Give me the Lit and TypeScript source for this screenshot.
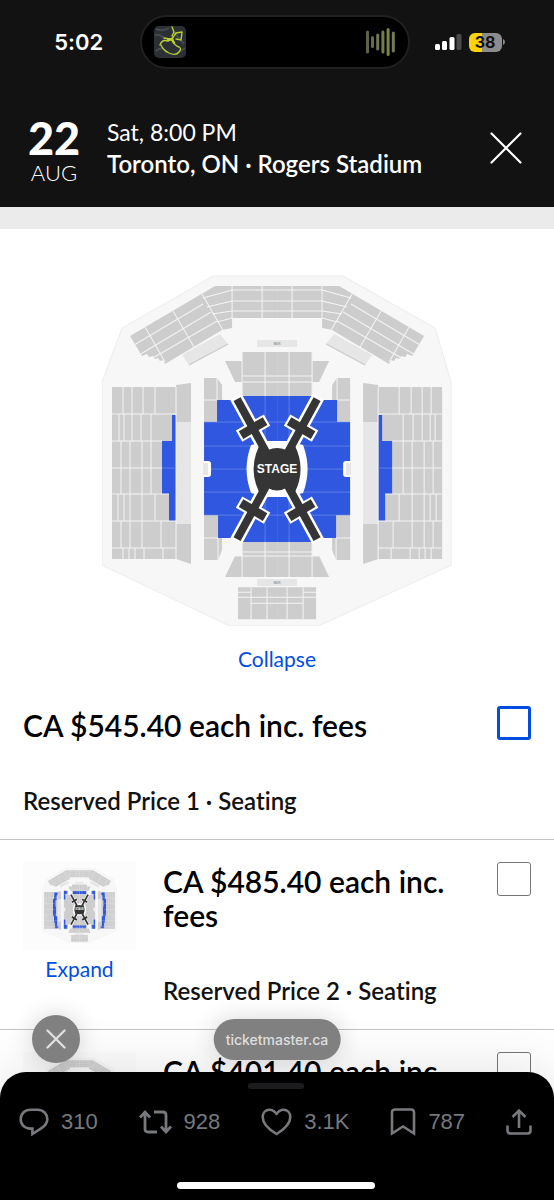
import { LitElement, html, css, svg } from "lit";
import { customElement, property } from "lit/decorators.js";

type Zone = "centre" | "edges";

const GREY = "#cdcdcd";
const PALE = "#e6e6e6";
const BLUE = "#2f57df";

/** West half of the stadium; the east half is the same drawing mirrored. */
const halfBowl = (zone: Zone) => {
  const centre = zone === "centre";
  const floor = centre ? BLUE : GREY;
  return svg`
    <g fill=${GREY}>
      <path d="M130 336L215 286H277V318H232V328L222 330L165 364L163 360L160 361L158 358L155 359L153 356L149 357L147 354L142 356Z" />
      <path d="M112 387H176V559H112Z" />
      <path d="M176 385L191 383V422H176ZM176 524H191V564L176 559Z" />
      <path d="M204 378H217L222 385V400H217V422H204ZM204 515H218V538H222V550L218 560H204Z" />
      <path d="M225 361H242V352H277V398H242V382H235Z" />
      <path d="M225 577L235 556H242V540H277V577Z" />
      <path d="M238 587H277V619H238Z" />
    </g>
    <g fill=${PALE}>
      <path d="M182 355L220 334L228 344L189 365Z" />
      <path d="M176 422H191V524H176Z" />
      <path d="M257 340H277V347H257ZM257 579H277V586H257Z" />
    </g>
    <path d="M189 365L228 344" stroke="#c9c9c9" />
    <path d="M204 422H217V400H232L242 396H277V542H242V538H218V515H204Z" fill=${floor} />
    ${centre
      ? svg`<path d="M172 415H176V521H169V494H162V441H172Z" fill=${BLUE} />`
      : svg`<path d="M160 389H175V402H170V425H165V455H167V500H173V545H178V556H162V530H158V500H153V420H158Z
          M204 382H220V396H211V422H204ZM204 515H211V540H220V558H204ZM246 382H277V396H246ZM246 543H277V556H246Z" fill=${BLUE} />`}
    <g fill="none" stroke="#f4f4f4" stroke-width="1">
      <path d="M232 286V318M262 286V318M232 290H277M232 301H277M232 311H277" />
      <path d="M145 327L165 362M173 311L194 347M202 294L224 332" />
      <path d="M134 345L203 304M139 355L211 312M151 359L217 321M203 298L232 290M207 307L232 301M212 314L232 311M217 322L232 318" />
      <path d="M112 414H176M112 441H162M112 468H162M112 494H169M112 521H176M112 548H176M176 387V559" />
      <path d="M123 387V414M132 387V414M143 387V414M155 387V414" />
      <path d="M119 414V441M124 414V441M132 414V441M141 414V441M151 414V441" />
      <path d="M121 441V494M130 441V494M142 441V494M151 441V494" />
      <path d="M118 494V521M124 494V521M130 494V521M142 494V521M155 494V521" />
      <path d="M121 521V548M130 521V548M142 521V548M161 521V548" />
      <path d="M123 548V559M129 548V559M135 548V559M144 548V559M163 548V559" />
      <path d="M204 400H217M217 378V400M204 538H218M218 538V560" />
      <path d="M242 352V396M265 352V396M242 376H277M242 382H277" />
      <path d="M242 542V577M265 542V577M242 552H277M235 556H277" />
      <path d="M251 587V619M267 587V619M238 592H251M251 597H277M251 603H277M238 597H251" />
    </g>
    <g fill="none" stroke="#7f98ec" stroke-width="0.6" opacity=${centre ? 1 : 0}>
      <path d="M204 422H277M204 446H277M204 469H277M204 492H277M204 515H277M265 396V542M162 468H176" />
    </g>
    <path d="M203 461H208Q211 461 211 464V474Q211 477 208 477H203Z" fill="#fff" />
    <path d="M203 463H208V475H203Z" fill=${PALE} />
  `;
};

/** One catwalk running from the round stage to the north-west corner. */
const catwalk = (mirror: string) => svg`
  <path transform=${mirror} d="M237 399L266 452" />
`;

/** The short bar that crosses a catwalk half way along. */
const crossbar = (mirror: string) => svg`
  <path transform=${mirror} d="M241 435L265 421" />
`;

/** White clearance around a catwalk and its crossbar. */
const clearance = (mirror: string) => svg`
  <path transform=${mirror} d="M236 397L266 452M239 436L267 420" />
`;

const MIRRORS = [
  "",
  "translate(554 0) scale(-1 1)",
  "translate(0 938) scale(1 -1)",
  "translate(554 938) scale(-1 -1)",
];

@customElement("seat-map")
class SeatMap extends LitElement {
  @property() zone: Zone = "centre";

  static styles = css`
    :host {
      display: block;
    }
    .map {
      display: block;
      width: 100%;
      height: auto;
    }
    .label {
      font: 700 12px "Liberation Sans", Arial, sans-serif;
      fill: #fff;
    }
    .mix {
      font: 700 4px "Liberation Sans", Arial, sans-serif;
      fill: #999;
    }
  `;

  render() {
    return html`
      <svg class="map" viewBox="102 275 350 351" role="img" aria-label="Seating map">
        <path
          d="M213 276H343L435 328L451 382V565L320 625H228L102 565V382L122 328Z"
          fill="#f7f7f7"
          stroke="#ededed"
        />
        ${halfBowl(this.zone)}
        <g transform="translate(554 0) scale(-1 1)">${halfBowl(this.zone)}</g>
        <g fill="none" stroke="#fff" stroke-width="13">${MIRRORS.map(clearance)}</g>
        <path
          d="M251 445L268 441H286L303 445Q312 469 303 493L286 497H268L251 493Q242 469 251 445Z"
          fill="#fff"
        />
        <g fill="none" stroke="#353535">
          <g stroke-width="8">${MIRRORS.map(catwalk)}</g>
          <g stroke-width="9">${MIRRORS.map(crossbar)}</g>
        </g>
        <path
          d="M259 446L268 450Q277 446 286 450L295 446Q306 469 295 492L286 488Q277 493 268 488L259 492Q248 469 259 446Z"
          fill="#353535"
        />
        <text class="label" x="277" y="473" text-anchor="middle">STAGE</text>
        ${this.zone === "centre"
          ? svg`
            <text class="mix" x="277" y="345" text-anchor="middle">MIX</text>
            <text class="mix" x="277" y="584" text-anchor="middle">MIX</text>`
          : null}
      </svg>
    `;
  }
}

@customElement("status-bar")
class StatusBar extends LitElement {
  static styles = css`
    :host {
      display: grid;
      grid-template-columns: 1fr 270px 1fr;
      align-items: center;
      height: 84px;
      padding-right: 5px;
      color: #fff;
      font-family: Inter, sans-serif;
    }
    .time {
      justify-self: center;
      padding-left: 18px;
      font-size: 22px;
      font-weight: 600;
    }
    .island {
      display: flex;
      align-items: center;
      justify-content: space-between;
      box-sizing: border-box;
      height: 54px;
      padding: 0 12px;
      border: 2px solid #202020;
      border-radius: 27px;
      background: #000;
    }
    .system {
      display: flex;
      align-items: center;
      gap: 7px;
      padding-left: 25px;
    }
    .battery {
      display: flex;
      align-items: center;
    }
    .charge {
      width: 33px;
      border-radius: 6px;
      background: linear-gradient(90deg, #fbd30b 40%, #8c8c8c 40%);
      color: #111;
      font-size: 16px;
      font-weight: 700;
      line-height: 19px;
      text-align: center;
    }
    svg {
      display: block;
    }
  `;

  render() {
    return html`
      <span class="time">5:02</span>
      <div class="island">
        <svg width="32" height="32" viewBox="0 0 32 32" aria-hidden="true">
          <rect width="32" height="32" rx="5" fill="#2c3035" />
          <path d="M2 3Q9 6 15 2M1 9Q6 8 11 13M2 25Q8 19 13 27M20 6L30 18M22 28L31 22" stroke="#454a50" stroke-width="2" fill="none" />
          <g fill="none" stroke="#b9cf2b" stroke-linecap="round">
            <path d="M6 19Q8 13 14 15Q18 14 20 10L22 7L28 6M18 1L20 6L18 10M28 6L27 14L22 13" stroke-width="1.4" />
            <path d="M10 12L17 13Q21 20 25 21M25 21Q28 22 25 26Q22 30 15 27Q9 24 7 19" stroke-width="1.3" />
            <path d="M14 14L18 13L20 17" stroke-width="2.4" />
          </g>
        </svg>
        <svg width="30" height="30" viewBox="0 0 30 30" stroke-width="3" stroke-linecap="round" aria-hidden="true">
          <path d="M1.500 5V25" stroke="#5d6249" />
          <path d="M6.500 10.500V19.500" stroke="#646a4b" />
          <path d="M11.700 8V22" stroke="#6f7752" />
          <path d="M16.900 5V25" stroke="#737d4c" />
          <path d="M22.100 2.500V27.500" stroke="#79844b" />
          <path d="M27.300 6V24" stroke="#747d50" />
        </svg>
      </div>
      <div class="system">
        <svg width="27" height="18" viewBox="0 0 27 18" role="img" aria-label="Signal">
          <rect x="0" y="11" width="5" height="6" rx="1.500" fill="#fff" />
          <rect x="7" y="8" width="5" height="9" rx="1.500" fill="#fff" />
          <rect x="14.500" y="4" width="5" height="13" rx="1.500" fill="#fff" />
          <rect x="21.500" y="1" width="5" height="16" rx="1.500" fill="#4a4a4a" />
        </svg>
        <div class="battery">
          <div class="charge">38</div>
          <svg width="4" height="8" viewBox="0 0 4 8" aria-hidden="true">
            <path d="M1 1Q3 2 3 4Q3 6 1 7Z" fill="#8c8c8c" />
          </svg>
        </div>
      </div>
    `;
  }
}

interface Offer {
  id: string;
  price: string;
  detail?: string;
  thumb: boolean;
  active: boolean;
}

const OFFERS: Offer[] = [
  { id: "p1", price: "CA $545.40 each inc. fees", detail: "Reserved Price 1 · Seating", thumb: false, active: true },
  { id: "p2", price: "CA $485.40 each inc. fees", detail: "Reserved Price 2 · Seating", thumb: true, active: false },
  { id: "p3", price: "CA $401.40 each inc.", thumb: true, active: false },
];

@customElement("app-root")
class AppRoot extends LitElement {
  static styles = css`
    :host {
      display: flex;
      flex-direction: column;
      height: 100vh;
      overflow: hidden;
      background: #fff;
      color: #121212;
      font-family: Lato, sans-serif;
      font-variant-ligatures: none;
    }
    button {
      display: flex;
      align-items: center;
      padding: 0;
      border: 0;
      background: none;
      color: inherit;
      font: inherit;
    }
    svg {
      display: block;
      flex: none;
    }
    .top {
      flex: none;
      border-bottom: 22px solid #ebebeb;
      background: #121212;
      color: #fff;
    }
    .event {
      display: flex;
      align-items: flex-start;
      padding: 33px 32px 20px 29px;
    }
    .date {
      display: flex;
      flex-direction: column;
      align-items: center;
      width: 50px;
      margin-right: 28px;
    }
    .day {
      font-size: 45px;
      font-weight: 900;
      line-height: 42px;
    }
    .month {
      font-size: 22px;
      font-weight: 300;
      line-height: 28px;
    }
    .where {
      flex: 1;
      font-size: 23px;
      line-height: 31px;
    }
    .venue {
      font-size: 24px;
      font-weight: 600;
    }
    .dismiss {
      margin-top: 15px;
    }
    .content {
      flex: 1;
      min-height: 0;
      overflow: hidden;
    }
    .overview {
      display: flex;
      flex-direction: column;
      align-items: center;
      gap: 21px;
      padding: 46px 24px 13px;
    }
    .overview seat-map {
      width: 69.200%;
      min-width: 280px;
      max-width: 480px;
    }
    .link {
      color: #024ddf;
      font-size: 21px;
      line-height: 24px;
      text-decoration: none;
    }
    .offer {
      display: flex;
      align-items: flex-start;
      padding: 22px 23px 24px;
      border-bottom: 1px solid #c4c4c4;
    }
    .preview {
      display: flex;
      flex-direction: column;
      align-items: center;
      gap: 8px;
      width: 113px;
      margin-right: 27px;
    }
    .frame {
      width: 75px;
      padding: 6px 19px;
      background: #fcfcfc;
    }
    .text {
      flex: 1;
      display: flex;
      flex-direction: column;
      gap: 45px;
      padding: 2px 24px 0 0;
    }
    .price {
      color: #000;
      font-size: 30px;
      font-weight: 600;
      line-height: 34px;
    }
    .detail {
      font-size: 24px;
      font-weight: 600;
      line-height: 28px;
    }
    .tick {
      appearance: none;
      flex: none;
      width: 34px;
      height: 34px;
      margin: 0;
      border: 1px solid #767676;
      border-radius: 3px;
      background: #fff;
    }
    .tick.active {
      border: 3px solid #024ddf;
    }
    .sheet {
      position: relative;
      flex: none;
      box-sizing: border-box;
      height: 128px;
      margin-top: -26px;
      padding: 11px 22px 11px 19px;
      border-radius: 26px 26px 0 0;
      background: #000;
      color: #77797d;
      display: flex;
      flex-direction: column;
      align-items: center;
      justify-content: space-between;
      box-shadow: 0 0 60px rgba(0, 0, 0, 0.12);
    }
    .handle {
      width: 56px;
      height: 6px;
      border-radius: 3px;
      background: #1c1c1f;
    }
    .actions {
      display: flex;
      justify-content: space-between;
      align-self: stretch;
      padding-bottom: 28px;
      font: 22px/34px "Liberation Sans", Arial, sans-serif;
    }
    .action {
      gap: 12px;
    }
    .home {
      width: 198px;
      height: 7px;
      border-radius: 4px;
      background: #fff;
    }
    .close,
    .site {
      position: absolute;
      background: #808080;
      color: #dedede;
      box-shadow: 0 0 24px rgba(0, 0, 0, 0.16);
    }
    .close {
      left: 32px;
      bottom: calc(100% + 9px);
      justify-content: center;
      width: 48px;
      height: 48px;
      border-radius: 50%;
    }
    .site {
      left: 50%;
      bottom: calc(100% + 12px);
      transform: translateX(-50%);
      padding: 0 12px;
      border-radius: 21px;
      font: 500 14px/41px Inter, sans-serif;
    }
  `;

  private offer(o: Offer) {
    return html`
      <section class="offer">
        ${o.thumb
          ? html`<div class="preview">
              <div class="frame"><seat-map zone="edges"></seat-map></div>
              ${o.detail ? html`<a class="link" href="#${o.id}">Expand</a>` : null}
            </div>`
          : null}
        <div class="text">
          <label class="price" for=${o.id}>${o.price}</label>
          ${o.detail ? html`<div class="detail">${o.detail}</div>` : null}
        </div>
        <input id=${o.id} class="tick ${o.active ? "active" : ""}" type="checkbox" />
      </section>
    `;
  }

  render() {
    return html`
      <header class="top">
        <status-bar></status-bar>
        <div class="event">
          <div class="date">
            <span class="day">22</span>
            <span class="month">AUG</span>
          </div>
          <div class="where">
            <div>Sat, 8:00 PM</div>
            <div class="venue">Toronto, ON · Rogers Stadium</div>
          </div>
          <button class="dismiss" aria-label="Close">
            <svg width="32" height="32" viewBox="0 0 32 32" fill="none" stroke="#fff" stroke-width="2.200" stroke-linecap="round">
              <path d="M1.500 1.500L30.500 30.500M30.500 1.500L1.500 30.500" />
            </svg>
          </button>
        </div>
      </header>
      <main class="content">
        <div class="overview">
          <seat-map zone="centre"></seat-map>
          <a class="link" href="#map">Collapse</a>
        </div>
        ${OFFERS.map((o) => this.offer(o))}
      </main>
      <footer class="sheet">
        <button class="close" aria-label="Close page">
          <svg width="20" height="20" viewBox="0 0 20 20" stroke="#dedede" stroke-width="2.400" stroke-linecap="round">
            <path d="M1.500 1.500L18.500 18.500M18.500 1.500L1.500 18.500" />
          </svg>
        </button>
        <div class="site">ticketmaster.ca</div>
        <div class="handle"></div>
        <div class="actions">
          <button class="action" aria-label="Replies">
            <svg width="30" height="28" viewBox="0 0 30 28" fill="none" stroke="currentColor" stroke-width="2.600">
              <path d="M11.500 1.700H18.500C24.500 1.700 28.300 6 28.300 11C28.300 15 26 18 22.500 20.200L13.400 26V20.600H11.500C5.500 20.600 1.700 16.500 1.700 11.200C1.700 6 5.500 1.700 11.500 1.700Z" />
            </svg>
            310
          </button>
          <button class="action" aria-label="Reposts">
            <svg width="33" height="26" viewBox="0 0 33 26" fill="none" stroke="currentColor" stroke-width="2.800">
              <path d="M1 8.500L6 3L11 8.500M6 4V20Q6 23 9 23H18M22 17.500L27 23L32 17.500M27 22V6Q27 3 24 3H15" />
            </svg>
            928
          </button>
          <button class="action" aria-label="Likes">
            <svg width="31" height="28" viewBox="0 0 31 28" fill="none" stroke="currentColor" stroke-width="2.600" stroke-linejoin="round">
              <path d="M15.500 6C13.500 3 11 1.700 8.500 1.700C4.500 1.700 1.700 4.800 1.700 9C1.700 15.500 8 21.500 15.500 26C23 21.500 29.300 15.500 29.300 9C29.300 4.800 26.500 1.700 22.500 1.700C20 1.700 17.500 3 15.500 6Z" />
            </svg>
            3.1K
          </button>
          <button class="action" aria-label="Bookmarks">
            <svg width="26" height="28" viewBox="0 0 26 28" fill="none" stroke="currentColor" stroke-width="2.600">
              <path d="M2 4.500Q2 1.500 5 1.500H21Q24 1.500 24 4.500V25.500L13 18.500L2 25.500Z" />
            </svg>
            787
          </button>
          <button class="action" aria-label="Share">
            <svg width="26" height="28" viewBox="0 0 26 28" fill="none" stroke="currentColor" stroke-width="2.600">
              <path d="M13 20V3M6.500 9L13 2.500L19.500 9M1.500 17.500V22.500Q1.500 25.500 4.500 25.500H21.500Q24.500 25.500 24.500 22.500V17.500" />
            </svg>
          </button>
        </div>
        <div class="home"></div>
      </footer>
    `;
  }
}
